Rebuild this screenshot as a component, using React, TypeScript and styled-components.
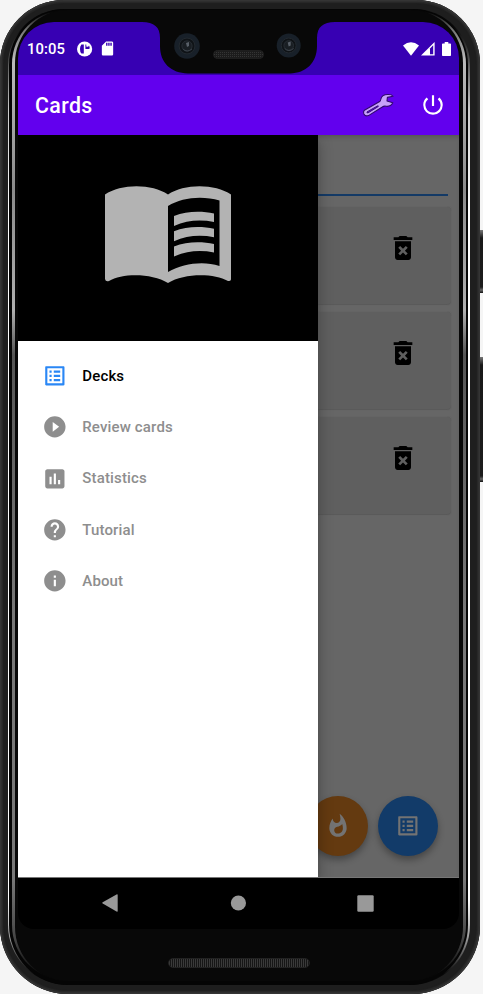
import React from 'react';
import styled, { createGlobalStyle } from 'styled-components';
import {
  MdDeleteForever,
  MdHelp,
  MdInfo,
  MdInsertChart,
  MdListAlt,
  MdPlayCircleFilled,
  MdPowerSettingsNew,
  MdSdCard,
  MdWhatshot,
} from 'react-icons/md';

const GlobalStyle = createGlobalStyle`
  * { box-sizing: border-box; }
  body { margin: 0; background: #f5f5f5; overflow: hidden; }
  svg { display: block; flex: none; }
`;

const Stage = styled.div`
  display: flex;
  width: 483px;
  height: 994px;
  font-family: Roboto, sans-serif;
`;

const Shell = styled.div`
  width: 480px;
  height: 994px;
  flex: none;
  padding: 9px 10.5px 9.5px 7.5px;
  border-radius: 64px 64px 68px 68px;
  background: #1e1e1e;
  box-shadow: inset 0 0 0 1.5px #343434, inset 0 0 1px 3px #292929;
`;

const OuterGlint = styled.div`
  height: 100%;
  padding: 0 1.5px;
  border-radius: 56px 56px 60px 60px;
  background: linear-gradient(#080808 18px, #444 45px, #ccc 100px, #fff 200px, #fff 890px, #999 930px, #080808 965px);
`;

const Channel = styled.div`
  height: 100%;
  padding: 1px 2.5px 4px;
  border-radius: 56px 56px 60px 60px;
  background: #050505;
`;

const InnerGlint = styled.div`
  height: 100%;
  padding: 0 3px;
  border-radius: 54px 54px 56px 56px;
  background: linear-gradient(#080808 2px, #777 20px, #bbb 50px, #8b8b8b 180px, #b0b0b0 300px, #555 345px, #777 600px, #777 870px, #444 930px, #080808 965px);
`;

const Face = styled.div`
  display: flex;
  flex-direction: column;
  align-items: center;
  height: 100%;
  padding: 12px 3.5px 0;
  border-radius: 53px 53px 54px 54px;
  background: #080808;
`;

const Screen = styled.div`
  position: relative;
  display: flex;
  flex-direction: column;
  width: 441px;
  height: 907px;
  flex: none;
  overflow: hidden;
  border-radius: 36px 36px 16px 16px;
  background: #000;
`;

const BottomSpeaker = styled.div`
  width: 142px;
  height: 10px;
  margin-top: 29px;
  border-radius: 5px;
  border: 1px solid #222;
  background: repeating-linear-gradient(90deg, #3a3a3a 0 1px, #161616 1px 2px);
`;

const SideButtons = styled.div`
  display: flex;
  flex-direction: column;
  gap: 64px;
  width: 3px;
  padding-top: 230px;
`;

const SideButton = styled.div<{ $length: number }>`
  height: ${(p) => p.$length}px;
  background: linear-gradient(#777, #191919 8px, #1c1c1c calc(100% - 6px), #666 calc(100% - 3px), #111);
`;

const StatusBar = styled.header`
  display: flex;
  align-items: center;
  justify-content: space-between;
  height: 53px;
  flex: none;
  padding: 0 8px 0 9px;
  background: #3700b3;
  color: #fff;
`;

const StatusGroup = styled.div<{ $gap: number; $inset?: number }>`
  display: flex;
  align-items: center;
  gap: ${(p) => p.$gap}px;
  padding-left: ${(p) => p.$inset ?? 0}px;
`;

const Clock = styled.span`
  width: 38px;
  font-size: 14.8px;
  font-weight: 500;
  letter-spacing: 0.1px;
  white-space: nowrap;
`;

const Notch = styled.svg`
  position: absolute;
  top: 0;
  left: 124px;
`;

const AppBar = styled.div`
  display: flex;
  align-items: center;
  height: 60px;
  flex: none;
  padding: 0 13px 0 17px;
  background: #6200ee;
  color: #fff;
`;

const Title = styled.h1`
  flex: 1;
  margin: 0;
  font-size: 21.3px;
  font-weight: 500;
  letter-spacing: 0.4px;
`;

const Actions = styled.div`
  display: flex;
  align-items: center;
  gap: 25.5px;
`;

const Body = styled.div`
  display: grid;
  grid-template-columns: 300px 1fr;
  height: 743px;
  flex: none;
  border-bottom: 1px solid #777;
`;

const Drawer = styled.aside`
  z-index: 1;
  background: #fff;
  box-shadow: 0 6px 14px rgba(0, 0, 0, 0.3);
  clip-path: inset(0 -20px 0 0);
`;

const DrawerHeader = styled.div`
  display: flex;
  align-items: center;
  justify-content: center;
  height: 206px;
  padding-bottom: 8px;
  background: #000;
`;

const Menu = styled.nav`
  padding-top: 9px;
`;

const MenuItem = styled.div<{ $active?: boolean }>`
  display: flex;
  align-items: center;
  gap: 15px;
  height: 51.4px;
  padding-left: 23.6px;
  color: ${(p) => (p.$active ? '#000' : '#8e8e8e')};
  font-size: 15px;
  font-weight: 500;
  letter-spacing: 0.15px;
  svg { color: ${(p) => (p.$active ? '#2a87f5' : '#8e8e8e')}; }
`;

const Main = styled.main`
  display: flex;
  flex-direction: column;
  overflow: hidden;
  background: #666;
  box-shadow: inset 0 4px 4px -2px #555;
`;

const SearchField = styled.div`
  height: 60.5px;
  flex: none;
  margin-right: 11px;
  border-bottom: 2px solid #143a66;
`;

const DeckList = styled.div`
  display: flex;
  flex-direction: column;
  gap: 8px;
  padding: 11.5px 8px 0 0;
`;

const DeckCard = styled.div`
  display: flex;
  justify-content: flex-end;
  height: 97px;
  padding: 25px 32px 0 0;
  border-radius: 0 4px 4px 0;
  background: #5f5f5f;
  box-shadow: 0 0.5px 1px #595959, 0 0 1px #5a5a5a;
  color: #000;
`;

const FabRow = styled.div`
  display: flex;
  justify-content: flex-end;
  gap: 9.5px;
  margin: auto 21.5px 21.5px 0;
`;

const Fab = styled.div<{ $color: string }>`
  display: flex;
  align-items: center;
  justify-content: center;
  width: 60px;
  height: 60px;
  flex: none;
  border-radius: 50%;
  background: ${(p) => p.$color};
  box-shadow: 0 4px 7px rgba(0, 0, 0, 0.32);
  color: #737373;
`;

const NavBar = styled.footer`
  display: flex;
  align-items: center;
  justify-content: space-between;
  height: 50px;
  padding: 0 85px 0 84px;
`;

const SpeakerPattern = () => (
  <pattern id="mesh" width="2" height="2" patternUnits="userSpaceOnUse">
    <rect width="2" height="2" fill="#1c1c1c" />
    <rect width="1" height="1" fill="#343434" />
  </pattern>
);

const Lens = ({ x, y, r }: { x: number; y: number; r: number }) => (
  <g transform={`translate(${x} ${y})`}>
    <circle r={r} fill="#182029" />
    <circle r={r * 0.62} fill="#0f1317" stroke="#23292f" strokeWidth="1" />
    <circle r={r * 0.4} fill="#191e23" stroke="#272d33" strokeWidth="1" />
    <path d="M-1 -3 L2 -4 L2 0 L0 1Z" fill="#596069" />
    <path d="M-4 3 Q0 7 5 3" fill="none" stroke="#3d444c" />
  </g>
);

const CameraNotch = () => (
  <Notch width="194" height="53" viewBox="142 22 194 53">
    <defs>
      <SpeakerPattern />
    </defs>
    <path
      d="M142 22 C154 22 160 27 160 38 V46 C160 63 171 73 188 73.5 H290 C306 73 317 63 317 46 V38 C317 27 323 22 335 22Z"
      fill="#080808"
    />
    <Lens x={187} y={46} r={12.8} />
    <Lens x={288.7} y={45.5} r={12} />
    <rect x="213.5" y="50.5" width="50" height="8" rx="4" fill="url(#mesh)" stroke="#1e1e1e" />
  </Notch>
);

const NotificationIcon = () => (
  <svg width="16" height="16" viewBox="0 0 16 16">
    <circle cx="7.6" cy="8" r="7.6" fill="#fff" />
    <path d="M6.8 3.4 H4.4 Q3 5 3 8 Q3 11 4.4 12.4 H6.8Z" fill="#3700b3" />
    <path d="M8.4 3.4 H9.3 V8 H8.4Z M9.3 5.4 Q11.4 6.6 12 4.4 Q13.2 6 12.4 8 H9.3Z" fill="#3700b3" />
  </svg>
);

const WifiIcon = () => (
  <svg width="16" height="14" viewBox="0 0 16 14">
    <path d="M0 3.4 Q8 -2.8 16 3.4 L8 13.8Z" fill="#fff" />
  </svg>
);

const SignalIcon = () => (
  <svg width="14" height="14" viewBox="0 0 14 14">
    <path d="M0 13.6 L13.6 0 V13.6Z" fill="#fff" />
    <path d="M9 6.4 L12.2 3.2 V12.3 H9Z" fill="#3700b3" />
  </svg>
);

const BatteryIcon = () => (
  <svg width="9" height="14" viewBox="0 0 9 14">
    <path d="M2.7 0 H6.3 V1.4 H8.2 Q9 1.4 9 2.2 V13.2 Q9 14 8.2 14 H.8 Q0 14 0 13.2 V2.2 Q0 1.4 .8 1.4 H2.7Z" fill="#fff" />
  </svg>
);

const WrenchIcon = () => (
  <svg width="33" height="25" viewBox="0 0 33 25">
    <path
      d="M2.4 17.2 L17.7 8.6 Q18.6 7.8 18.9 6 Q20 1.2 26.3 1.5 Q29.8 1.4 31 3.2 L25.4 4.4 L25 8 L30.8 9.8 Q28.8 13.7 24.3 13.3 Q21.8 12.8 20.3 14 L6.5 22.6 Q3.2 23.7 1.9 21 Q.9 18.7 2.4 17.2Z"
      fill="#c7a0fa"
      stroke="#31086f"
      strokeWidth="1.1"
      strokeLinejoin="round"
    />
    <path d="M5 18.9 L15.5 12.9 Q16.8 12.6 16.2 13.6 L6 19.9 Q4.4 20 5 18.9Z" fill="#6200ee" stroke="#31086f" strokeWidth="0.9" />
  </svg>
);

const BookIcon = () => (
  <svg width="126" height="98" viewBox="105 185 126 98">
    <path
      d="M105 194.5 C121 183.5 152 183.5 168 194.5 C184 183.5 215 183.5 231 194.5 V279.5 Q230.5 281.5 228 281 C214 273 184 273 168 283 C152 273 122 273 109 281 Q105.5 282 105 279Z"
      fill="#b3b3b3"
    />
    <path d="M168 206 C182 197 203 195.5 219.5 200.5 V266 C202 260.5 183 264 168 272Z" fill="#000" />
    {[0, 15.2, 30.5].map((dy) => (
      <path
        key={dy}
        transform={`translate(0 ${dy})`}
        d="M174 216 C187 210.8 202 211 214 213.5 V222 C201 219.5 187 220 174 226Z"
        fill="#b3b3b3"
      />
    ))}
  </svg>
);

const menuItems = [
  { label: 'Decks', Icon: MdListAlt, active: true },
  { label: 'Review cards', Icon: MdPlayCircleFilled },
  { label: 'Statistics', Icon: MdInsertChart },
  { label: 'Tutorial', Icon: MdHelp },
  { label: 'About', Icon: MdInfo },
];

export default function App() {
  return (
    <>
      <GlobalStyle />
      <Stage>
        <Shell>
          <OuterGlint>
            <Channel>
              <InnerGlint>
                <Face>
                  <Screen>
                    <StatusBar>
                      <StatusGroup $gap={11.5}>
                        <Clock>10:05</Clock>
                        <StatusGroup $gap={6.5}>
                          <NotificationIcon />
                          <MdSdCard size={17} />
                        </StatusGroup>
                      </StatusGroup>
                      <StatusGroup $gap={2}>
                        <WifiIcon />
                        <SignalIcon />
                        <StatusGroup $gap={0} $inset={5}>
                          <BatteryIcon />
                        </StatusGroup>
                      </StatusGroup>
                    </StatusBar>
                    <CameraNotch />
                    <AppBar>
                      <Title>Cards</Title>
                      <Actions>
                        <WrenchIcon />
                        <MdPowerSettingsNew size={26} />
                      </Actions>
                    </AppBar>
                    <Body>
                      <Drawer>
                        <DrawerHeader>
                          <BookIcon />
                        </DrawerHeader>
                        <Menu>
                          {menuItems.map(({ label, Icon, active }) => (
                            <MenuItem key={label} $active={active}>
                              <Icon size={25.7} />
                              {label}
                            </MenuItem>
                          ))}
                        </Menu>
                      </Drawer>
                      <Main>
                        <SearchField />
                        <DeckList>
                          {[1, 2, 3].map((deck) => (
                            <DeckCard key={deck}>
                              <MdDeleteForever size={32} />
                            </DeckCard>
                          ))}
                        </DeckList>
                        <FabRow>
                          <Fab $color="#643a10">
                            <MdWhatshot size={26} />
                          </Fab>
                          <Fab $color="#123b69">
                            <MdListAlt size={25.7} />
                          </Fab>
                        </FabRow>
                      </Main>
                    </Body>
                    <NavBar>
                      <svg width="16" height="18" viewBox="0 0 16 18">
                        <path d="M.7 8.2 L14.5 .4 Q15.7 0 15.7 1 V17 Q15.7 18 14.5 17.5 L.7 9.6 Q-.2 8.9 .7 8.2Z" fill="#999" />
                      </svg>
                      <svg width="16" height="16" viewBox="0 0 16 16">
                        <circle cx="8.4" cy="8" r="7.6" fill="#999" />
                      </svg>
                      <svg width="17" height="17" viewBox="0 0 17 17">
                        <rect x=".3" y=".3" width="16.4" height="16.4" rx="1.2" fill="#999" />
                      </svg>
                    </NavBar>
                  </Screen>
                  <BottomSpeaker />
                </Face>
              </InnerGlint>
            </Channel>
          </OuterGlint>
        </Shell>
        <SideButtons>
          <SideButton $length={63} />
          <SideButton $length={125} />
        </SideButtons>
      </Stage>
    </>
  );
}
